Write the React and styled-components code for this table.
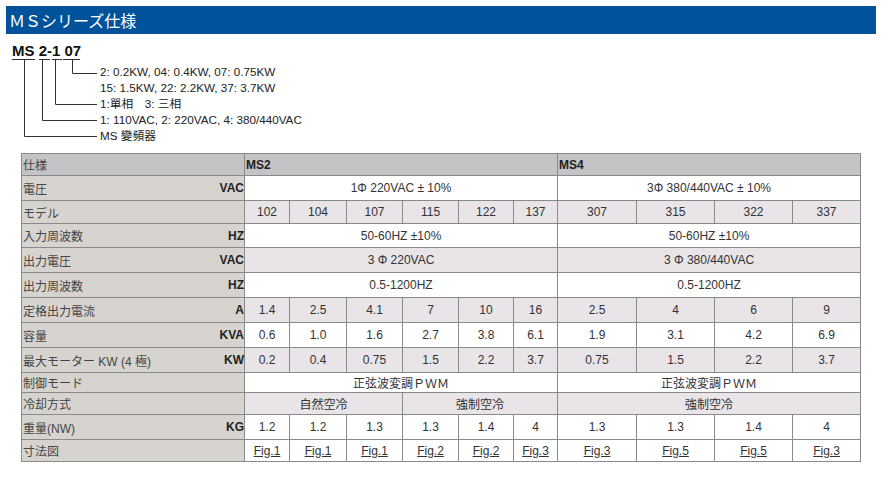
import React from 'react'
import styled, { createGlobalStyle } from 'styled-components'

const GlobalStyle = createGlobalStyle`
  body {
    margin: 0;
    background: #fff;
    font-family: 'Liberation Sans', Arial, 'Noto Sans CJK JP', sans-serif;
    color: #333;
  }
`

const colors = {
  blue: '#00529a',
  border: '#8a8a8a',
  head: '#c4c3c5',
  label: '#d7d4cf',
  alt: '#e8e4e8',
  text: '#333',
}

const Page = styled.div`
  padding: 6px;
`

const TitleBar = styled.h1`
  margin: 0;
  width: 870px;
  height: 28px;
  display: flex;
  align-items: center;
  padding-left: 3px;
  box-sizing: border-box;
  background: ${colors.blue};
  color: #fff;
  font: 400 16px 'Noto Sans CJK JP', sans-serif;
`

const Diagram = styled.div`
  display: flex;
  margin: 9px 0 0 6px;
`

const CodeColumn = styled.div`
  width: 88px;
`

const CodeText = styled.div`
  font: 700 15px/16px 'Liberation Sans', Arial, sans-serif;
  color: #111;
  white-space: pre;
`

const Legend = styled.ul`
  list-style: none;
  margin: 21px 0 0;
  padding: 0;
  font: 11.7px/16px 'Liberation Sans', Arial, 'Noto Sans CJK JP', sans-serif;
  color: #222;
`

const SpecTable = styled.table`
  border-collapse: collapse;
  table-layout: fixed;
  width: 839px;
  margin: 9px 0 0 15px;
  font-size: 12px;
  color: ${colors.text};
`

const Row = styled.tr`
  height: ${p => p.$h}px;
`

const HeadCell = styled.th`
  background: ${colors.head};
  border: 1px solid ${colors.border};
  text-align: left;
  padding: 0 1px;
  font-weight: ${p => (p.$bold ? 700 : 400)};
  color: ${p => (p.$bold ? '#222' : '#444')};
`

const LabelCell = styled.td`
  background: ${colors.label};
  border: 1px solid ${colors.border};
  padding: 0 0 0 1px;
  color: #444;
`

const LabelWrap = styled.div`
  display: flex;
  justify-content: space-between;
  align-items: center;
`

const Unit = styled.b`
  color: #222;
`

const DataCell = styled.td`
  background: ${p => (p.$alt ? colors.alt : '#fff')};
  border: 1px solid ${colors.border};
  text-align: center;
  padding: 0;
`

const FigLink = styled.a`
  color: #333;
  text-decoration: underline;
`

const widths = [223, 45, 57, 56, 56, 55, 44, 79, 78, 78, 68]

const span = (text, n) => ({ text, n })
const each = list => list.map(t => ({ text: t, n: 1 }))

const rows = [
  { label: '電圧', unit: 'VAC', h: 25, cells: [span('1Φ 220VAC ± 10%', 6), span('3Φ 380/440VAC ± 10%', 4)] },
  { label: 'モデル', h: 23, alt: true, cells: each(['102', '104', '107', '115', '122', '137', '307', '315', '322', '337']) },
  { label: '入力周波数', unit: 'HZ', h: 24, cells: [span('50-60HZ ±10%', 6), span('50-60HZ ±10%', 4)] },
  { label: '出力電圧', unit: 'VAC', h: 25, alt: true, cells: [span('3 Φ 220VAC', 6), span('3 Φ 380/440VAC', 4)] },
  { label: '出力周波数', unit: 'HZ', h: 25, cells: [span('0.5-1200HZ', 6), span('0.5-1200HZ', 4)] },
  { label: '定格出力電流', unit: 'A', h: 25, alt: true, cells: each(['1.4', '2.5', '4.1', '7', '10', '16', '2.5', '4', '6', '9']) },
  { label: '容量', unit: 'KVA', h: 25, cells: each(['0.6', '1.0', '1.6', '2.7', '3.8', '6.1', '1.9', '3.1', '4.2', '6.9']) },
  { label: '最大モーター KW (4 極)', unit: 'KW', h: 25, alt: true, cells: each(['0.2', '0.4', '0.75', '1.5', '2.2', '3.7', '0.75', '1.5', '2.2', '3.7']) },
  { label: '制御モード', h: 20, cells: [span('正弦波変調ＰＷＭ', 6), span('正弦波変調ＰＷＭ', 4)] },
  { label: '冷却方式', h: 22, alt: true, cells: [span('自然空冷', 3), span('強制空冷', 3), span('強制空冷', 4)] },
  { label: '重量(NW)', unit: 'KG', h: 25, cells: each(['1.2', '1.2', '1.3', '1.3', '1.4', '4', '1.3', '1.3', '1.4', '4']) },
  { label: '寸法図', h: 22, link: true, cells: each(['Fig.1', 'Fig.1', 'Fig.1', 'Fig.2', 'Fig.2', 'Fig.3', 'Fig.3', 'Fig.5', 'Fig.5', 'Fig.3']) },
]

const legend = [
  '2: 0.2KW, 04: 0.4KW, 07: 0.75KW',
  '15: 1.5KW, 22: 2.2KW, 37: 3.7KW',
  '1:單相　3: 三相',
  '1: 110VAC, 2: 220VAC, 4: 380/440VAC',
  'MS 變頻器',
]

// connector lines from each part of the model code to its legend line
const Connectors = () => (
  <svg width="88" height="80" viewBox="0 0 88 80" fill="none" stroke="#333" strokeWidth="1">
    <path d="M0 0.5H23M27 0.5H38M40 0.5H50M51 0.5H68" />
    <path d="M12.5 0.5V77.5H85" />
    <path d="M30.5 0.5V61.5H85" />
    <path d="M43.5 0.5V45.5H85" />
    <path d="M60.5 0.5V14.5H85" />
  </svg>
)

const App = () => (
  <Page>
    <GlobalStyle />
    <TitleBar>ＭＳシリーズ仕様</TitleBar>
    <Diagram>
      <CodeColumn>
        <CodeText>MS 2-1 07</CodeText>
        <Connectors />
      </CodeColumn>
      <Legend>
        {legend.map(line => (
          <li key={line}>{line}</li>
        ))}
      </Legend>
    </Diagram>
    <SpecTable>
      <colgroup>
        {widths.map((w, i) => (
          <col key={i} style={{ width: w }} />
        ))}
      </colgroup>
      <thead>
        <Row $h={22}>
          <HeadCell>仕様</HeadCell>
          <HeadCell $bold colSpan={6}>MS2</HeadCell>
          <HeadCell $bold colSpan={4}>MS4</HeadCell>
        </Row>
      </thead>
      <tbody>
        {rows.map(row => (
          <Row key={row.label} $h={row.h}>
            <LabelCell>
              <LabelWrap>
                <span>{row.label}</span>
                {row.unit && <Unit>{row.unit}</Unit>}
              </LabelWrap>
            </LabelCell>
            {row.cells.map((c, i) => (
              <DataCell key={i} colSpan={c.n} $alt={row.alt}>
                {row.link ? <FigLink href="#">{c.text}</FigLink> : c.text}
              </DataCell>
            ))}
          </Row>
        ))}
      </tbody>
    </SpecTable>
  </Page>
)

export default App
